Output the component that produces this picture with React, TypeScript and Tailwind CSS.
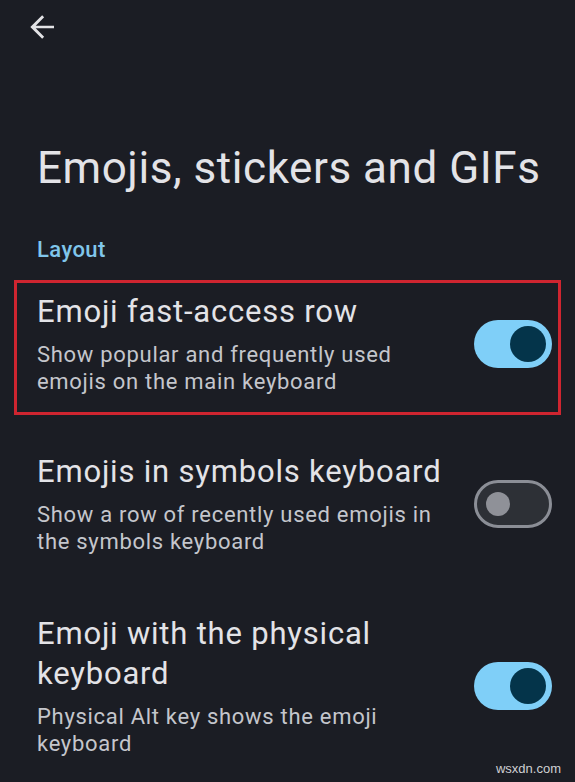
import React from "react";

function Toggle({ on }: { on: boolean }) {
  if (on) {
    return (
      <div className="flex h-[48px] w-[78px] shrink-0 items-center justify-end rounded-full bg-[#7fcff8] pr-[6px]">
        <div className="h-[36px] w-[36px] rounded-full bg-[#04344a]" />
      </div>
    );
  }
  return (
    <div className="flex h-[48px] w-[78px] shrink-0 items-center rounded-full border-[3px] border-[#8b8e96] bg-[#2d3036] pl-[9px]">
      <div className="h-[24px] w-[24px] rounded-full bg-[#8f9198]" />
    </div>
  );
}

function Item({
  title,
  sub,
  on,
}: {
  title: React.ReactNode;
  sub: React.ReactNode;
  on: boolean;
}) {
  return (
    <div className="flex items-center justify-between">
      <div className="flex flex-col">
        <div className="text-[31px] leading-[40px] tracking-[0.8px] text-[#e3e3e7]">{title}</div>
        <div className="mt-[9px] text-[22px] leading-[27px] tracking-[0.7px] text-[#c4c6cc]">{sub}</div>
      </div>
      <Toggle on={on} />
    </div>
  );
}

export default function App() {
  return (
    <div
      className="relative h-[782px] w-[575px] overflow-hidden bg-[#1b1d24]"
      style={{ fontFamily: "Roboto, 'Noto Sans', sans-serif" }}
    >
      <div className="flex h-[54px] items-center pl-[24px]">
        <svg width="36" height="36" viewBox="0 0 24 24" fill="#e3e3e6">
          <path d="M20 11.1H7.83l5.59-5.59L12.1 4.1l-7.9 7.9 7.9 7.9 1.32-1.41L7.83 12.9H20v-1.8z" />
        </svg>
      </div>

      <h1 className="mt-[88px] pl-[37px] text-[44px] leading-[52px] tracking-[0.55px] text-[#e3e3e7]">
        Emojis, stickers and GIFs
      </h1>

      <div className="mt-[42px] pl-[37px] text-[22px] font-medium leading-[28px] tracking-[0.4px] text-[#80c6eb]">
        Layout
      </div>

      <div className="mx-[14px] mt-[16px] border-[3px] border-[#cf2530] pb-[17px] pl-[20px] pr-[6px] pt-[9px]">
        <Item
          title="Emoji fast-access row"
          sub={
            <>
              Show popular and frequently used
              <br />
              emojis on the main keyboard
            </>
          }
          on
        />
      </div>

      <div className="mt-[37px] pl-[37px] pr-[23px]">
        <Item
          title="Emojis in symbols keyboard"
          sub={
            <>
              Show a row of recently used emojis in
              <br />
              the symbols keyboard
            </>
          }
          on={false}
        />
      </div>

      <div className="mt-[59px] pl-[37px] pr-[23px]">
        <Item
          title={
            <>
              Emoji with the physical
              <br />
              keyboard
            </>
          }
          sub={
            <>
              Physical Alt key shows the emoji
              <br />
              keyboard
            </>
          }
          on
        />
      </div>

      <div className="absolute bottom-[4px] right-[14px] text-[13px] text-[#cfd0d3]" style={{ fontFamily: "'Liberation Sans', sans-serif" }}>
        wsxdn.com
      </div>
    </div>
  );
}
